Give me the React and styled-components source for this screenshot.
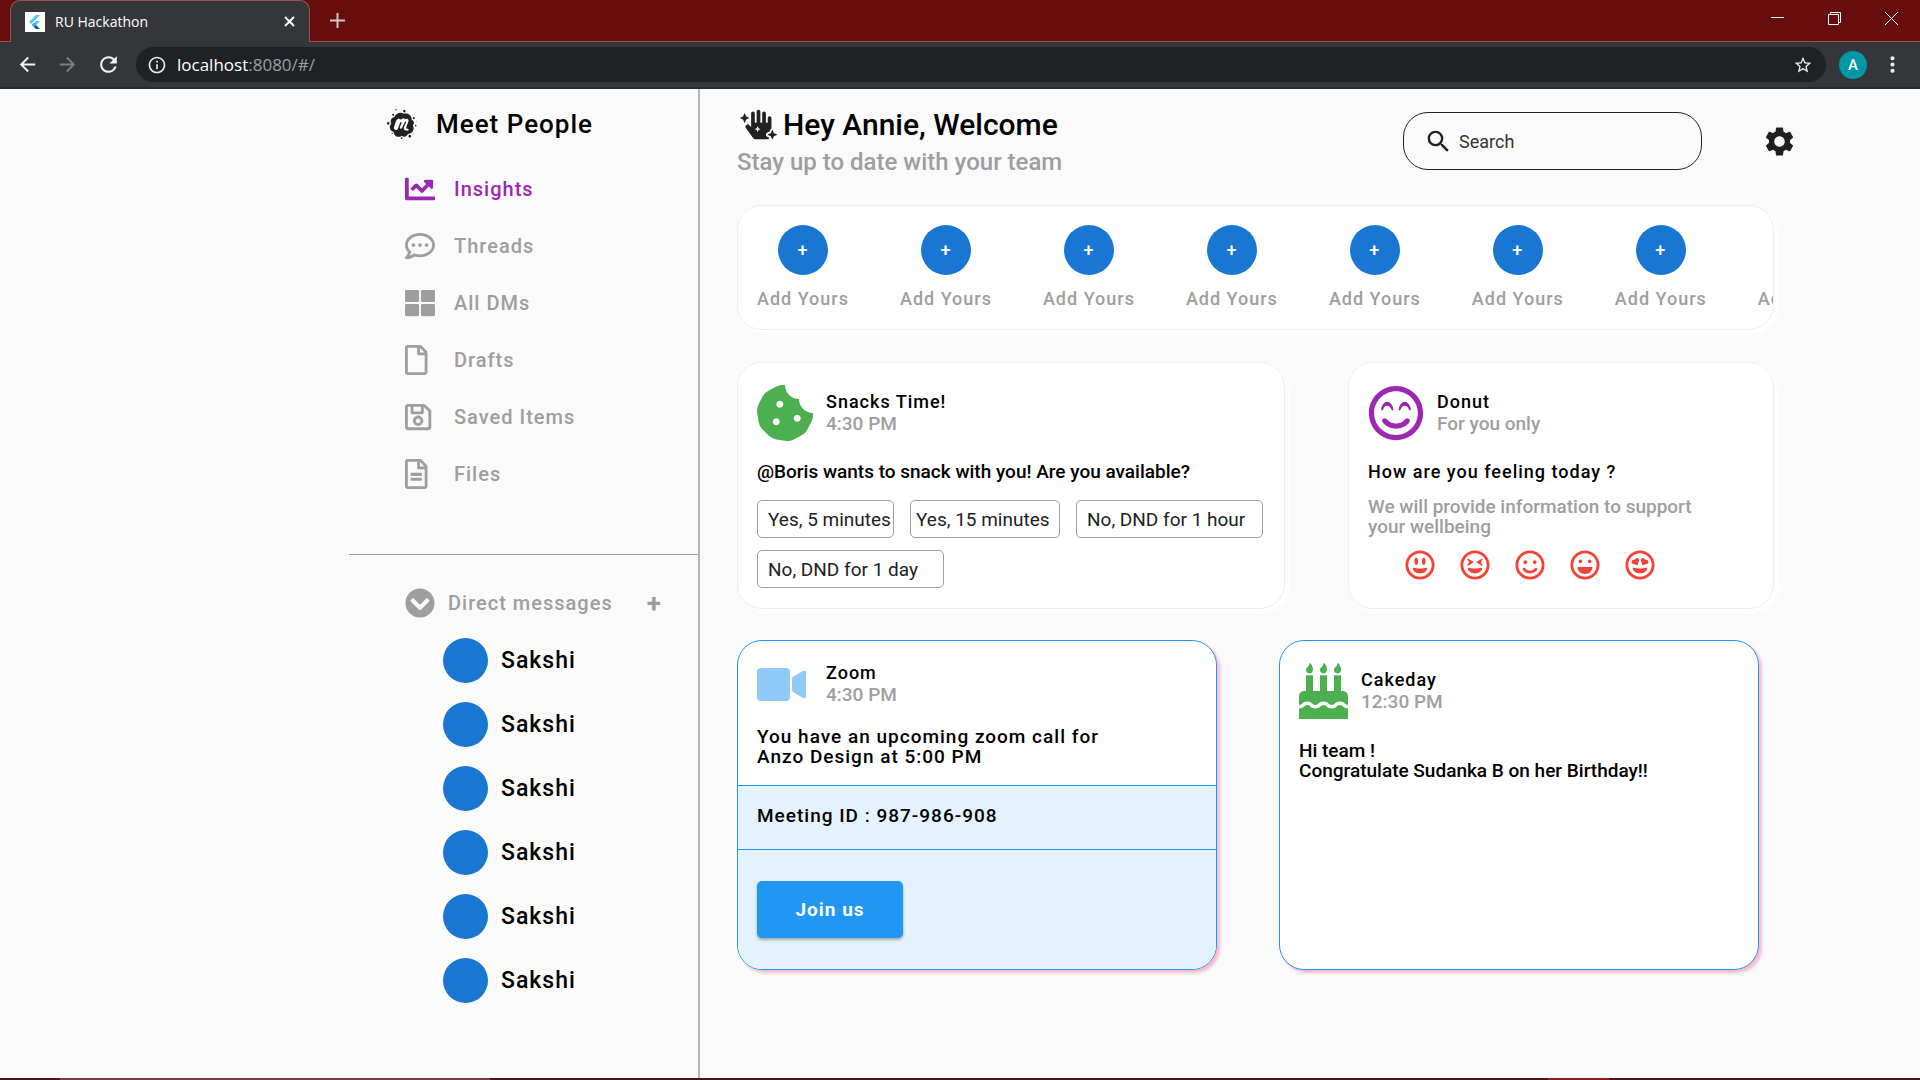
import React from "react";
import styled, { createGlobalStyle } from "styled-components";
import {
  FaMeetup,
  FaHandSparkles,
  FaChartLine,
  FaRegCommentDots,
  FaThLarge,
  FaRegFile,
  FaRegSave,
  FaRegFileAlt,
  FaChevronCircleDown,
  FaCookieBite,
  FaRegSmileBeam,
  FaRegGrinAlt,
  FaRegGrinSquint,
  FaRegSmile,
  FaRegLaugh,
  FaRegGrinHearts,
  FaBirthdayCake,
} from "react-icons/fa";
import {
  MdSearch,
  MdSettings,
  MdArrowBack,
  MdArrowForward,
  MdRefresh,
  MdInfoOutline,
  MdStarBorder,
  MdMoreVert,
} from "react-icons/md";

const GlobalStyle = createGlobalStyle`
  * {
    box-sizing: border-box;
  }

  body {
    margin: 0;
    background: #fafafa;
    color: #000;
    font-family: Roboto, "Liberation Sans", sans-serif;
    font-weight: 500;
  }

  h1, h2, h3, p, ul {
    margin: 0;
    padding: 0;
    font-size: inherit;
    font-weight: inherit;
  }

  ul {
    list-style: none;
  }

  a {
    color: inherit;
    text-decoration: none;
  }

  button {
    margin: 0;
    padding: 0;
    border: 0;
    background: none;
    color: inherit;
    font: inherit;
    letter-spacing: inherit;
    cursor: pointer;
  }

  svg {
    display: block;
    flex-shrink: 0;
  }
`;

const Page = styled.div`
  min-height: 100vh;
  display: flex;
  flex-direction: column;
`;

/* browser frame */

const TabBar = styled.div`
  height: 42px;
  padding-left: 10px;
  display: flex;
  align-items: flex-end;
  background: #680d0d;
  border-bottom: 1px solid #a05052;
  color: #fff;
`;

const BrowserTab = styled.div`
  width: 300px;
  height: 42px;
  margin-bottom: -1px;
  padding: 0 14px;
  display: flex;
  align-items: center;
  gap: 10px;
  background: #35363a;
  border: 1px solid #a05052;
  border-bottom: 0;
  border-radius: 10px 10px 0 0;
  font-family: "Open Sans", "Noto Sans", sans-serif;
  font-size: 14px;
  font-weight: 400;

  span {
    flex: 1;
  }
`;

const NewTab = styled.button`
  height: 42px;
  margin-left: 20px;
  display: flex;
  align-items: center;
`;

const WindowButtons = styled.div`
  height: 37px;
  margin-left: auto;
  padding-right: 22px;
  display: flex;
  align-self: flex-start;
  align-items: center;
  gap: 44px;
`;

const Toolbar = styled.div`
  height: 47px;
  padding: 0 15px 0 16px;
  display: flex;
  align-items: center;
  background: #35363a;
  border-bottom: 2px solid #28292c;
  color: #e8eaed;
`;

const ToolButton = styled.button`
  width: 40px;
  display: flex;
  color: ${({ $dim }) => ($dim ? "#7d7e81" : "#f1f3f4")};
`;

const AddressBar = styled.div`
  flex: 1;
  height: 35px;
  padding: 0 13px 0 11px;
  display: flex;
  align-items: center;
  gap: 10px;
  background: #202124;
  border-radius: 18px;
  font-family: "Open Sans", "Noto Sans", sans-serif;
  font-size: 17px;
  font-weight: 400;

  p {
    flex: 1;
    color: #9aa0a6;
  }

  strong {
    color: #fff;
    font-weight: 400;
  }
`;

const Profile = styled.button`
  width: 28px;
  height: 28px;
  margin: 0 13px 0 13px;
  border-radius: 50%;
  background: #0097a7;
  color: #fff;
  font-size: 15px;
`;

/* sidebar */

const Shell = styled.div`
  flex: 1;
  display: flex;
`;

const Sidebar = styled.aside`
  width: 351px;
  margin-left: 349px;
  border-right: 2px solid #b5b5b5;
`;

const Brand = styled.div`
  height: 70px;
  padding-left: 38px;
  display: flex;
  align-items: center;
  gap: 19px;

  svg {
    color: #212121;
  }

  h2 {
    font-size: 26px;
    letter-spacing: 1px;
  }
`;

const Nav = styled.ul`
  height: 396px;
  padding-top: 1px;
  display: flex;
  flex-direction: column;
  border-bottom: 1px solid #9e9e9e;
`;

const NavLink = styled.a`
  height: 57px;
  padding-left: 56px;
  display: grid;
  grid-template-columns: 49px 1fr;
  align-items: center;
  color: ${({ $active }) => ($active ? "#9c27b0" : "#9e9e9e")};
  font-size: 20px;
  letter-spacing: 1px;
`;

const MessagesHead = styled.div`
  height: 83px;
  padding: 13px 36px 0 56px;
  display: flex;
  align-items: center;
  color: #9e9e9e;
  font-size: 20px;
  letter-spacing: 1px;

  h3 {
    flex: 1;
    padding-left: 13px;
  }

  button {
    font-size: 26px;
    font-weight: 700;
  }
`;

const Contact = styled.a`
  height: 64px;
  padding-left: 94px;
  display: flex;
  align-items: flex-start;
  gap: 13px;
  font-size: 23px;
  line-height: 45px;
  letter-spacing: 1px;
`;

const Avatar = styled.span`
  width: 45px;
  height: 45px;
  border-radius: 50%;
  background: #1976d2;
`;

/* main area */

const Main = styled.main`
  flex: 1;
  min-width: 0;
  padding: 17px 146px 40px 37px;
`;

const Header = styled.header`
  height: 99px;
  display: flex;
  justify-content: space-between;
`;

const Title = styled.h1`
  padding-left: 3px;
  display: flex;
  align-items: center;
  gap: 6px;
  font-size: 30px;
  line-height: 36px;

  svg {
    color: #212121;
  }
`;

const Subtitle = styled.p`
  color: #9e9e9e;
  font-size: 24px;
  line-height: 38px;
`;

const Tools = styled.div`
  height: 58px;
  margin: 6px -23px 0 0;
  display: flex;
  align-items: center;
  gap: 60px;
  color: #212121;
`;

const SearchBox = styled.label`
  width: 299px;
  height: 58px;
  padding: 0 20px;
  display: flex;
  align-items: center;
  gap: 6px;
  border: 1px solid #212121;
  border-radius: 25px;

  input {
    width: 100%;
    padding: 0;
    border: 0;
    outline: 0;
    background: none;
    color: #212121;
    font: 400 18px Roboto, sans-serif;
  }

  input::placeholder {
    color: #333;
    opacity: 1;
  }
`;

const Card = styled.section`
  min-width: 0;
  padding: 20px 19px;
  background: #fff;
  border: 1px solid #eee;
  border-radius: 25px;
  box-shadow: 4px 4px 5px #fff;
`;

const Stories = styled(Card)`
  height: 125px;
  padding: 19px;
  display: flex;
  gap: 51px;
  overflow: hidden;
`;

const Story = styled.button`
  flex-shrink: 0;
  display: flex;
  flex-direction: column;
  align-items: center;
  gap: 12px;
  color: #9e9e9e;
  font-size: 18px;
  line-height: 24px;
  letter-spacing: 1px;

  span {
    width: 50px;
    height: 50px;
    border-radius: 50%;
    background: #1976d2;
    color: #fff;
    line-height: 50px;
  }
`;

const TopCards = styled.div`
  margin-top: 32px;
  display: grid;
  grid-template-columns: 1fr 426px;
  gap: 63px;

  ${Card} {
    height: 247px;
  }
`;

const BottomCards = styled.div`
  margin-top: 31px;
  padding-right: 15px;
  display: grid;
  grid-template-columns: 1fr 1fr;
  gap: 62px;
`;

const EventCard = styled(Card)`
  height: 330px;
  padding: 20px 0 0;
  display: flex;
  flex-direction: column;
  border-color: #2196f3;
  box-shadow: 3px 3px 3px #f8bbd0;
  overflow: hidden;
`;

const CardHead = styled.div`
  height: ${({ $compact }) => ($compact ? 46 : 60)}px;
  padding: 0 ${({ $inset }) => ($inset ? 19 : 0)}px;
  display: flex;
  align-items: center;
  gap: ${({ $compact }) => ($compact ? 19 : 13)}px;
  color: ${({ $color }) => $color};
`;

const CardTitle = styled.h2`
  color: #000;
  font-size: 18px;
  line-height: 22px;
  letter-spacing: 1px;

  small {
    display: block;
    color: #9e9e9e;
    font-size: 19px;
    letter-spacing: normal;
  }
`;

const Message = styled.p`
  padding: ${({ $inset }) => ($inset ? "20px 19px 18px" : "19px 0 0")};
  font-size: ${({ $wide }) => ($wide ? 18 : 19)}px;
  line-height: 20px;
  letter-spacing: ${({ $wide }) => ($wide ? "1px" : "normal")};
`;

const MeetingText = styled(Message)`
  font-size: 19px;
`;

const Muted = styled.p`
  max-width: 340px;
  padding-top: 15px;
  color: #9e9e9e;
  font-size: 19px;
  line-height: 20px;
`;

const Replies = styled.div`
  padding-top: 18px;
  display: flex;
  flex-wrap: wrap;
  gap: 12px 16px;
`;

const Reply = styled.button`
  width: ${({ $width }) => $width}px;
  height: 38px;
  padding-left: ${({ $pad }) => $pad || 10}px;
  border: 1px solid #9e9e9e;
  border-radius: 5px;
  color: #212121;
  font-size: 19px;
  font-weight: 400;
  text-align: left;
  white-space: nowrap;
`;

const Moods = styled.div`
  padding: 13px 0 0 37px;
  display: flex;
  gap: 25px;
  color: #f44336;
`;

const CakeIcon = styled(FaBirthdayCake)`
  width: 49px;
  height: 56px;
`;

const MeetingPanel = styled.div`
  flex: 1;
  background: #e3f2fd;
  border-top: 1px solid #2196f3;
`;

const MeetingId = styled.p`
  height: 64px;
  padding: 20px 19px;
  border-bottom: 1px solid #2196f3;
  font-size: 19px;
  line-height: 20px;
  letter-spacing: 1px;
`;

const JoinButton = styled.button`
  width: 146px;
  height: 57px;
  margin: 31px 19px;
  border-radius: 5px;
  background: #2196f3;
  box-shadow: 0 2px 3px rgba(0, 0, 0, 0.3);
  color: #fff;
  font-size: 19px;
  font-weight: 700;
  letter-spacing: 1px;
`;

/* strip of the desktop task bar */

const TaskStrip = styled.div`
  height: 2px;
  padding: 0 311px 0 60px;
  display: flex;
  justify-content: space-between;
  background: #4d1418;
`;

const TaskItem = styled.div`
  width: ${({ $width }) => $width}px;
  background: ${({ $color }) => $color};
`;

const links = [
  { label: "Insights", Icon: FaChartLine, active: true },
  { label: "Threads", Icon: FaRegCommentDots },
  { label: "All DMs", Icon: FaThLarge },
  { label: "Drafts", Icon: FaRegFile },
  { label: "Saved Items", Icon: FaRegSave },
  { label: "Files", Icon: FaRegFileAlt },
];

const moods = [
  { label: "Great", Icon: FaRegGrinAlt },
  { label: "Amused", Icon: FaRegGrinSquint },
  { label: "Good", Icon: FaRegSmile },
  { label: "Happy", Icon: FaRegLaugh },
  { label: "In love", Icon: FaRegGrinHearts },
];

const FlutterLogo = () => (
  <svg width="20" height="20" viewBox="0 0 20 20">
    <path d="M0 0h20v20H0z" fill="#fff" />
    <path d="M11 3h4L6 12l-2-2z" fill="#54c5f8" />
    <path d="M11 9h4l-4 4-2-2z" fill="#54c5f8" />
    <path d="M7 13l2-2 6 6h-4z" fill="#01579b" />
    <path d="M7 13l2-2 2 2-2 2z" fill="#29b6f6" />
  </svg>
);

const Browser = () => (
  <>
    <TabBar>
      <BrowserTab>
        <FlutterLogo />
        <span>RU Hackathon</span>
        <button aria-label="Close tab">
          <svg width="11" height="11" viewBox="0 0 11 11" stroke="#fff" strokeWidth="2">
            <path d="M1 1l9 9M10 1l-9 9" />
          </svg>
        </button>
      </BrowserTab>
      <NewTab aria-label="New tab">
        <svg width="15" height="15" viewBox="0 0 15 15" stroke="#d3c3c3" strokeWidth="2">
          <path d="M7.500 0v15M0 7.500h15" />
        </svg>
      </NewTab>
      <WindowButtons>
        <button aria-label="Minimize">
          <svg width="13" height="13" viewBox="0 0 13 13" stroke="#fff">
            <path d="M0 5.500h13" />
          </svg>
        </button>
        <button aria-label="Restore">
          <svg width="13" height="13" viewBox="0 0 13 13" stroke="#fff" fill="none">
            <path d="M.5 2.500h10v10H.5zM2.500 2.500v-2h10v10h-2" />
          </svg>
        </button>
        <button aria-label="Close window">
          <svg width="13" height="13" viewBox="0 0 13 13" stroke="#fff">
            <path d="M0 0l13 13M13 0L0 13" />
          </svg>
        </button>
      </WindowButtons>
    </TabBar>
    <Toolbar>
      <ToolButton aria-label="Back">
        <MdArrowBack size={23} />
      </ToolButton>
      <ToolButton aria-label="Forward" $dim>
        <MdArrowForward size={23} />
      </ToolButton>
      <ToolButton aria-label="Reload">
        <MdRefresh size={25} />
      </ToolButton>
      <AddressBar>
        <MdInfoOutline size={20} />
        <p>
          <strong>localhost</strong>:8080/#/
        </p>
        <MdStarBorder size={20} />
      </AddressBar>
      <Profile>A</Profile>
      <button aria-label="Menu">
        <MdMoreVert size={25} />
      </button>
    </Toolbar>
  </>
);

const VideoIcon = () => (
  <svg width="50" height="50" viewBox="0 0 50 50" fill="#90caf9">
    <rect x="0" y="9" width="33" height="33" rx="4" />
    <path d="M35 20q0-1.500 1-2.200L46 12q3-1.500 3 1.500v24q0 3-3 1.500L36 33q-1-.7-1-2.200z" />
  </svg>
);

const SideMenu = () => (
  <Sidebar>
    <Brand>
      <FaMeetup size={30} />
      <h2>Meet People</h2>
    </Brand>
    <nav>
      <Nav>
        {links.map(({ label, Icon, active }) => (
          <li key={label}>
            <NavLink href="#" $active={active}>
              <Icon size={30} preserveAspectRatio="xMinYMid meet" />
              {label}
            </NavLink>
          </li>
        ))}
      </Nav>
    </nav>
    <MessagesHead>
      <FaChevronCircleDown size={30} />
      <h3>Direct messages</h3>
      <button>+</button>
    </MessagesHead>
    {[1, 2, 3, 4, 5, 6].map((id) => (
      <Contact key={id} href="#">
        <Avatar />
        Sakshi
      </Contact>
    ))}
  </Sidebar>
);

const App = () => {
  return (
    <Page>
      <GlobalStyle />
      <Browser />
      <Shell>
        <SideMenu />
        <Main>
          <Header>
            <div>
              <Title>
                <FaHandSparkles size={37} />
                Hey Annie, Welcome
              </Title>
              <Subtitle>Stay up to date with your team</Subtitle>
            </div>
            <Tools>
              <SearchBox>
                <MdSearch size={29} />
                <input type="text" placeholder="Search" aria-label="Search" />
              </SearchBox>
              <button aria-label="Settings">
                <MdSettings size={35} />
              </button>
            </Tools>
          </Header>

          <Stories>
            {[1, 2, 3, 4, 5, 6, 7, 8].map((id) => (
              <Story key={id}>
                <span>+</span>
                Add Yours
              </Story>
            ))}
          </Stories>

          <TopCards>
            <Card>
              <CardHead $color="#4caf50">
                <FaCookieBite size={56} />
                <CardTitle>
                  Snacks Time!<small>4:30 PM</small>
                </CardTitle>
              </CardHead>
              <Message>@Boris wants to snack with you! Are you available?</Message>
              <Replies>
                <Reply $width={137}>Yes, 5 minutes</Reply>
                <Reply $width={150} $pad={5}>
                  Yes, 15 minutes
                </Reply>
                <Reply $width={187}>No, DND for 1 hour</Reply>
                <Reply $width={187}>No, DND for 1 day</Reply>
              </Replies>
            </Card>
            <Card>
              <CardHead $color="#9c27b0">
                <FaRegSmileBeam size={56} />
                <CardTitle>
                  Donut<small>For you only</small>
                </CardTitle>
              </CardHead>
              <Message $wide>How are you feeling today ?</Message>
              <Muted>We will provide information to support your wellbeing</Muted>
              <Moods>
                {moods.map(({ label, Icon }) => (
                  <button key={label} aria-label={label}>
                    <Icon size={30} />
                  </button>
                ))}
              </Moods>
            </Card>
          </TopCards>

          <BottomCards>
            <EventCard>
              <CardHead $inset $compact>
                <VideoIcon />
                <CardTitle>
                  Zoom<small>4:30 PM</small>
                </CardTitle>
              </CardHead>
              <MeetingText $inset $wide>
                You have an upcoming zoom call for
                <br />
                Anzo Design at 5:00 PM
              </MeetingText>
              <MeetingPanel>
                <MeetingId>Meeting ID : 987-986-908</MeetingId>
                <JoinButton>Join us</JoinButton>
              </MeetingPanel>
            </EventCard>
            <EventCard>
              <CardHead $inset $color="#4caf50">
                <CakeIcon />
                <CardTitle>
                  Cakeday<small>12:30 PM</small>
                </CardTitle>
              </CardHead>
              <Message $inset>
                Hi team !
                <br />
                Congratulate Sudanka B on her Birthday!!
              </Message>
            </EventCard>
          </BottomCards>
        </Main>
      </Shell>
      <TaskStrip>
        <TaskItem $width={430} $color="#7a3b3e" />
        <TaskItem $width={61} $color="#8e2022" />
      </TaskStrip>
    </Page>
  );
};

export default App;
